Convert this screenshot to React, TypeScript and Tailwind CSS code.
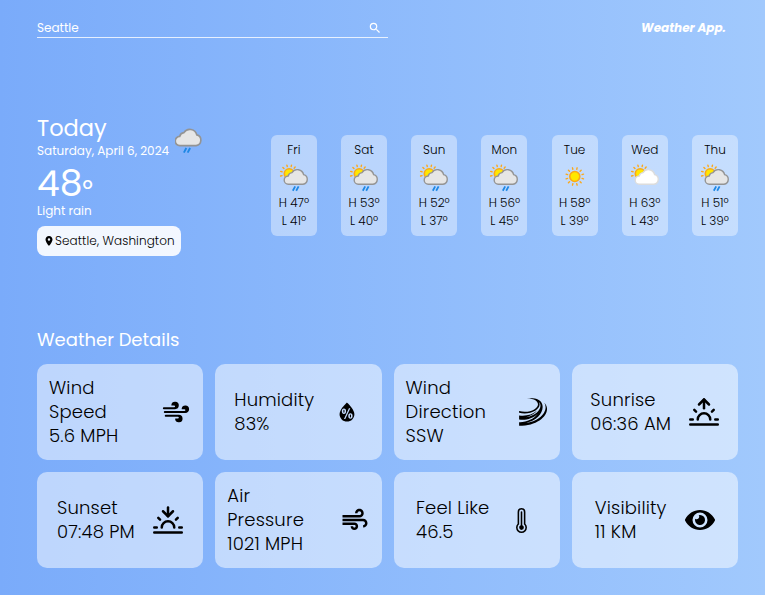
import type { ReactNode } from "react";
import { BsThermometerHigh } from "react-icons/bs";
import { FaEye } from "react-icons/fa";
import { FiSunrise, FiSunset } from "react-icons/fi";
import { GiWindSlap } from "react-icons/gi";
import { MdAir, MdLocationOn, MdSearch } from "react-icons/md";
import { PiWindFill } from "react-icons/pi";
import { WiHumidity } from "react-icons/wi";

const CLOUD =
  "M9.4 22.2 A4.1 4.1 0 0 1 9.2 14 A4.4 4.4 0 0 1 13 10.6 A6.4 6.4 0 0 1 24.6 12.6 A4.9 4.9 0 0 1 24 22.2 Z";

function Sun({ cx, cy, r, rays }: { cx: number; cy: number; r: number; rays: number[] }) {
  return (
    <g>
      <circle cx={cx} cy={cy} r={r} fill="#ffe800" stroke="#fba81a" strokeWidth="1.6" />
      {rays.map((deg) => (
        <line
          key={deg}
          x1={cx}
          y1={cy - r - 2.5}
          x2={cx}
          y2={cy - r - 4}
          stroke="#fba81a"
          strokeWidth="1.4"
          strokeLinecap="round"
          transform={`rotate(${deg} ${cx} ${cy})`}
        />
      ))}
    </g>
  );
}

type Sky = "rain" | "sunny" | "cloudy";

function SkyIcon({ sky }: { sky: Sky }) {
  if (sky === "sunny") {
    return (
      <svg className="mt-[3px] size-[30px]" viewBox="0 0 30 30">
        <Sun cx={14.8} cy={14.5} r={5} rays={[15, 45, 75, 105, 135, 165, 195, 225, 255, 285, 315, 345]} />
      </svg>
    );
  }
  return (
    <svg className="mt-[3px] size-[30px]" viewBox="0 0 30 30">
      <Sun cx={10.2} cy={11.7} r={4.9} rays={[-105, -75, -45, -15, 15, 42]} />
      <path
        d={CLOUD}
        fill={sky === "rain" ? "#e6e6e6" : "#ffffff"}
        stroke={sky === "rain" ? "#949494" : "#dcdcdc"}
        strokeWidth="1.4"
      />
      {sky === "rain" && (
        <path d="M16.2 24.4 L13.8 28.8 M19.6 24.4 L17.2 28.8" stroke="#1e88e5" strokeWidth="1.8" fill="none" />
      )}
    </svg>
  );
}

const days: { day: string; sky: Sky; high: string; low: string }[] = [
  { day: "Fri", sky: "rain", high: "H 47º", low: "L 41º" },
  { day: "Sat", sky: "rain", high: "H 53º", low: "L 40º" },
  { day: "Sun", sky: "rain", high: "H 52º", low: "L 37º" },
  { day: "Mon", sky: "rain", high: "H 56º", low: "L 45º" },
  { day: "Tue", sky: "sunny", high: "H 58º", low: "L 39º" },
  { day: "Wed", sky: "cloudy", high: "H 63º", low: "L 43º" },
  { day: "Thu", sky: "rain", high: "H 51º", low: "L 39º" },
];

const details: { lines: string[]; pad: string; width: string; icon: ReactNode }[] = [
  { lines: ["Wind", "Speed", "5.6 MPH"], pad: "pl-3", width: "w-28", icon: <PiWindFill size={30} /> },
  { lines: ["Humidity", "83%"], pad: "pl-[19px]", width: "w-[98px]", icon: <WiHumidity size={30} /> },
  { lines: ["Wind", "Direction", "SSW"], pad: "pl-3", width: "w-28", icon: <GiWindSlap size={30} /> },
  { lines: ["Sunrise", "06:36 AM"], pad: "pl-[18.6px]", width: "w-[98.4px]", icon: <FiSunrise size={30} /> },
  { lines: ["Sunset", "07:48 PM"], pad: "pl-5", width: "w-24", icon: <FiSunset size={30} /> },
  { lines: ["Air", "Pressure", "1021 MPH"], pad: "pl-3", width: "w-[113px]", icon: <MdAir size={30} /> },
  { lines: ["Feel Like", "46.5"], pad: "pl-[22.5px]", width: "w-[92.5px]", icon: <BsThermometerHigh size={25} /> },
  { lines: ["Visibility", "11 KM"], pad: "pl-[23px]", width: "w-[90px]", icon: <FaEye size={30} /> },
];

export default function App() {
  return (
    <div className="h-[595px] w-[765px] overflow-hidden bg-linear-to-r from-[#7aabfa] to-[#a1c9fd] pl-[37px] pr-[27px] font-['Poppins','Inter',sans-serif] text-black">
      <header className="flex items-start justify-between pt-[18px] text-white">
        <div className="flex h-5 w-[351px] items-center justify-between border-b border-white/80 pr-1.5">
          <span className="text-[12px]">Seattle</span>
          <MdSearch size={14} />
        </div>
        <h1 className="pr-3 text-[12px] leading-5 font-bold italic">Weather App.</h1>
      </header>

      <section className="mt-[76px] flex justify-between">
        <div className="text-white">
          <div className="flex">
            <div className="w-[138px] whitespace-nowrap">
              <p className="pt-px text-[22.5px] leading-[27px]">Today</p>
              <p className="text-[12px] leading-[18px]">Saturday, April 6, 2024</p>
            </div>
            <svg className="mt-[12px] size-[28px]" viewBox="5 4.6 25.2 25.2">
              <path d={CLOUD} fill="#e6e6e6" stroke="#949494" strokeWidth="1.5" />
              <path d="M15.2 24.4 L13 28.6 M18.6 24.4 L16.4 28.6" stroke="#1e88e5" strokeWidth="1.7" fill="none" />
            </svg>
          </div>
          <p className="mt-0.5 flex h-10 items-center pt-1 text-4xl leading-9">
            48<span className="text-[16px] leading-4 font-medium">o</span>
          </p>
          <p className="text-[12px] leading-[18px]">Light rain</p>
          <div className="mt-1.5 flex h-[30px] w-36 items-center rounded-lg bg-white/90 pl-1.5 text-[12px] font-light tracking-[0.1px] whitespace-nowrap text-black">
            <MdLocationOn size={12} />
            Seattle, Washington
          </div>
        </div>
        <div className="mt-[21px] flex h-[101px] gap-[24.2px]">
          {days.map((d) => (
            <div
              key={d.day}
              className="flex w-[46px] flex-col items-center rounded-md bg-white/40 pt-1.5 text-[12px] leading-[18px] font-light whitespace-nowrap"
            >
              <span className="tracking-[0.1px]">{d.day}</span>
              <SkyIcon sky={d.sky} />
              <span className="mt-0.5">{d.high}</span>
              <span>{d.low}</span>
            </div>
          ))}
        </div>
      </section>

      <h2 className="mt-[70px] text-lg leading-7 text-white">Weather Details</h2>
      <section className="mt-2.5 grid grid-cols-4 gap-3">
        {details.map((d) => (
          <div key={d.lines.join(" ")} className={`flex h-24 items-center rounded-[10px] bg-white/50 ${d.pad}`}>
            <div className={`shrink-0 text-lg leading-6 font-light tracking-[0.18px] whitespace-nowrap ${d.width}`}>
              {d.lines.map((text) => (
                <p key={text}>{text}</p>
              ))}
            </div>
            <div className="shrink-0">{d.icon}</div>
          </div>
        ))}
      </section>
    </div>
  );
}
